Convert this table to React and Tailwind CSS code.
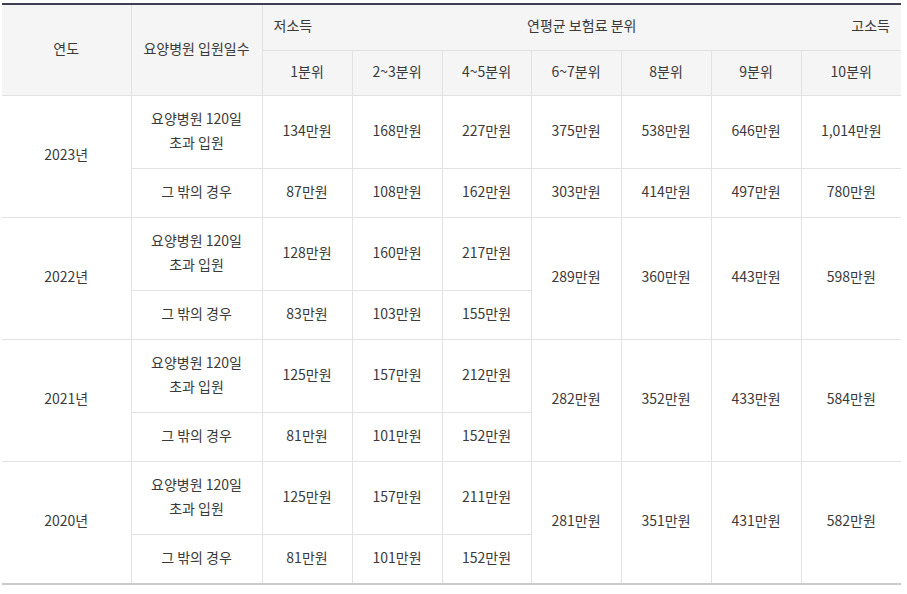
import React from 'react';

const years = [
  {
    year: '2023년',
    over: ['134만원', '168만원', '227만원', '375만원', '538만원', '646만원', '1,014만원'],
    other: ['87만원', '108만원', '162만원', '303만원', '414만원', '497만원', '780만원'],
  },
  {
    year: '2022년',
    over: ['128만원', '160만원', '217만원'],
    other: ['83만원', '103만원', '155만원'],
    shared: ['289만원', '360만원', '443만원', '598만원'],
  },
  {
    year: '2021년',
    over: ['125만원', '157만원', '212만원'],
    other: ['81만원', '101만원', '152만원'],
    shared: ['282만원', '352만원', '433만원', '584만원'],
  },
  {
    year: '2020년',
    over: ['125만원', '157만원', '211만원'],
    other: ['81만원', '101만원', '152만원'],
    shared: ['281만원', '351만원', '431만원', '582만원'],
  },
];

const quantiles = ['1분위', '2~3분위', '4~5분위', '6~7분위', '8분위', '9분위', '10분위'];

const cell = 'border border-[#e2e2e2] text-center align-middle px-0 pt-0 pb-[3px]';

export default function App() {
  return (
    <div
      className="w-[907px] h-[594px] bg-white pt-[3px] pl-[2px] text-[14px] text-[#3a3a3a]"
      style={{ fontFamily: '"Noto Sans CJK KR", "Noto Sans", sans-serif' }}
    >
      <div className="w-[899px] border-t-2 border-b-2 border-t-[#3e3e52] border-b-[#cbcbcb]">
        <table className="w-full table-fixed border-collapse border-hidden">
          <colgroup>
            <col className="w-[129px]" />
            <col className="w-[131px]" />
            <col className="w-[90px]" />
            <col className="w-[90px]" />
            <col className="w-[89px]" />
            <col className="w-[90px]" />
            <col className="w-[90px]" />
            <col className="w-[90px]" />
            <col />
          </colgroup>
          <thead className="bg-[#f5f5f5]">
            <tr className="h-[45px]">
              <th rowSpan={2} className={`${cell} font-normal`}>연도</th>
              <th rowSpan={2} className={`${cell} font-normal`}>요양병원 입원일수</th>
              <th colSpan={7} className={`${cell} font-normal`}>
                <div className="flex items-center justify-between px-[11px]">
                  <span className="w-[60px] text-left">저소득</span>
                  <span>연평균 보험료 분위</span>
                  <span className="w-[60px] text-right">고소득</span>
                </div>
              </th>
            </tr>
            <tr className="h-[45px]">
              {quantiles.map((q) => (
                <th key={q} className={`${cell} font-normal`}>{q}</th>
              ))}
            </tr>
          </thead>
          <tbody>
            {years.map((y) => (
              <React.Fragment key={y.year}>
                <tr className="h-[73px]">
                  <td rowSpan={2} className={cell}>{y.year}</td>
                  <td className={`${cell} leading-6`}>
                    요양병원 120일
                    <br />
                    초과 입원
                  </td>
                  {y.over.map((v, i) => (
                    <td key={i} className={cell}>{v}</td>
                  ))}
                  {y.shared &&
                    y.shared.map((v, i) => (
                      <td key={'s' + i} rowSpan={2} className={cell}>{v}</td>
                    ))}
                </tr>
                <tr className="h-[49px]">
                  <td className={cell}>그 밖의 경우</td>
                  {y.other.map((v, i) => (
                    <td key={i} className={cell}>{v}</td>
                  ))}
                </tr>
              </React.Fragment>
            ))}
          </tbody>
        </table>
      </div>
    </div>
  );
}
